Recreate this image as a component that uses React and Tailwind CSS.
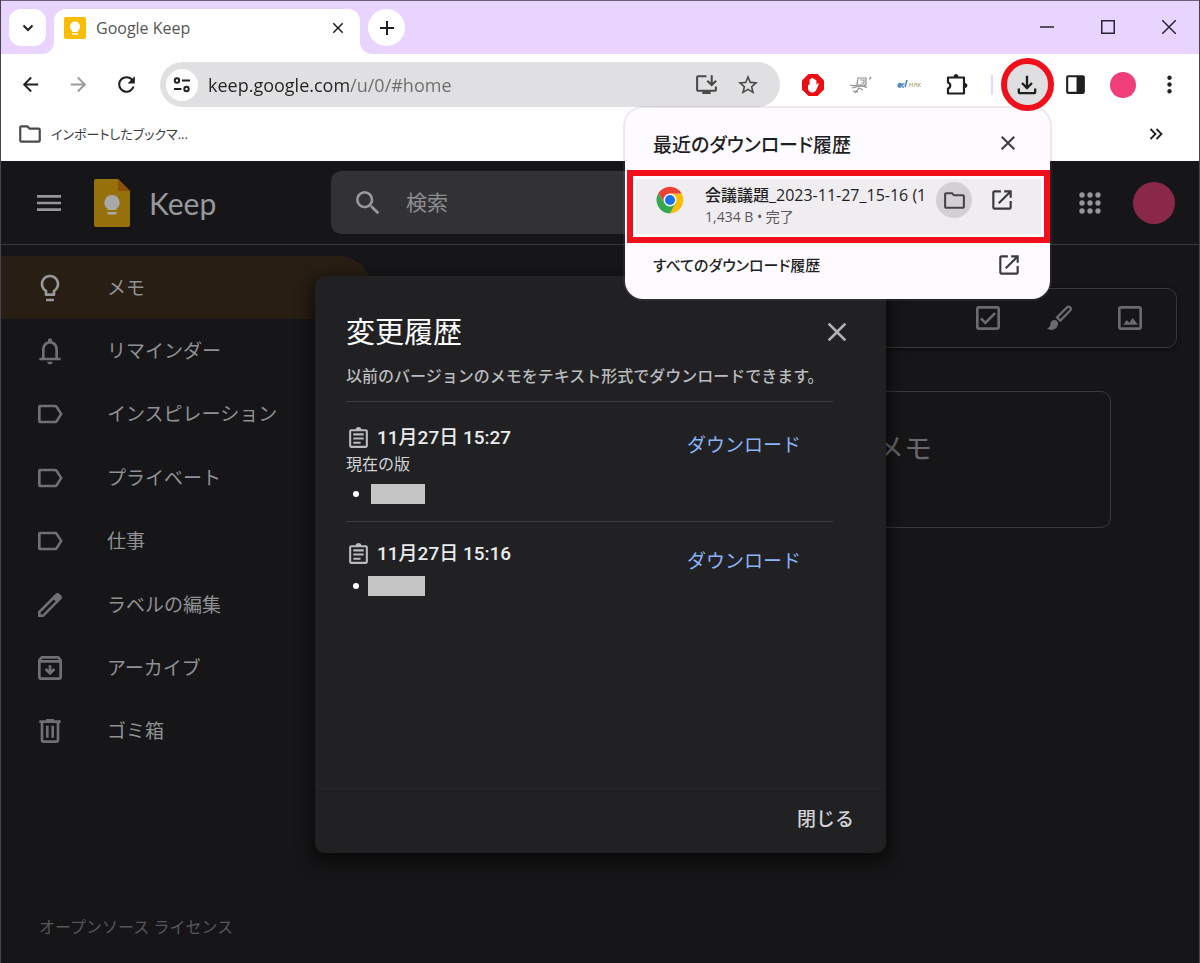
import React from 'react';

const ICONS = {
  menu: 'M3 18h18v-2H3v2zm0-5h18v-2H3v2zm0-7v2h18V6H3z',
  search:
    'M15.5 14h-.79l-.28-.27A6.47 6.47 0 0 0 16 9.5 6.5 6.5 0 1 0 9.5 16c1.61 0 3.09-.59 4.23-1.57l.27.28v.79l5 4.99L20.49 19l-4.99-5zm-6 0C7.01 14 5 11.99 5 9.5S7.01 5 9.5 5 14 7.01 14 9.5 11.99 14 9.5 14z',
  bulb: 'M9 21c0 .5.4 1 1 1h4c.6 0 1-.5 1-1v-1H9v1zm3-19C8.1 2 5 5.1 5 9c0 2.4 1.2 4.5 3 5.7V17c0 .5.4 1 1 1h6c.6 0 1-.5 1-1v-2.3c1.8-1.3 3-3.4 3-5.7 0-3.9-3.1-7-7-7zm2.9 11.1l-.9.6V16h-4v-2.3l-.9-.6C7.8 12.2 7 10.6 7 9c0-2.8 2.2-5 5-5s5 2.2 5 5c0 1.6-.8 3.2-2.1 4.1z',
  bell: 'M18 17v-6c0-3.07-1.63-5.64-4.5-6.32V4c0-.83-.67-1.5-1.5-1.5s-1.5.67-1.5 1.5v.68C7.64 5.36 6 7.92 6 11v6H4v2h16v-2h-2zm-2 0H8v-6c0-2.48 1.51-4.5 4-4.5s4 2.02 4 4.5v6zm-6 3h4c0 1.1-.9 2-2 2s-2-.9-2-2z',
  label: 'M3 17.500V6.500C3 5.700 3.700 5 4.500 5H16c.6 0 1.200.3 1.600.8L21.500 12l-3.900 6.200c-.4.5-1 .8-1.600.8H4.500c-.8 0-1.500-.7-1.500-1.500zM5 17h11l3.300-5L16 7H5v10z',
  pencil:
    'M20.41 4.94l-1.35-1.35c-.78-.78-2.05-.78-2.83 0L3 16.82V21h4.18L20.41 7.77c.79-.78.79-2.05 0-2.83zm-14 14.12L5 19v-1.36l9.82-9.82 1.41 1.41-9.82 9.83z',
  archive:
    'M20.54 5.23l-1.39-1.68C18.88 3.21 18.47 3 18 3H6c-.47 0-.88.21-1.16.55L3.46 5.23C3.17 5.57 3 6.02 3 6.5V19c0 1.1.9 2 2 2h14c1.1 0 2-.9 2-2V6.5c0-.48-.17-.93-.46-1.27zM6.24 5h11.52l.83 1H5.42l.82-1zM5 19V8h14v11H5zm11-5.5l-4 4-4-4 1.41-1.41L11 13.67V10h2v3.67l1.59-1.59L16 13.5z',
  trash: 'M15 4V3H9v1H4v2h1v13c0 1.1.9 2 2 2h10c1.1 0 2-.9 2-2V6h1V4h-5zm2 15H7V6h10v13zM9 8h2v9H9zm4 0h2v9h-2z',
  checkbox:
    'M19 3H5c-1.1 0-2 .9-2 2v14c0 1.1.9 2 2 2h14c1.1 0 2-.9 2-2V5c0-1.1-.9-2-2-2zm0 16H5V5h14v14zM18 9l-1.4-1.4-6.6 6.6-2.6-2.6L6 13l4 4z',
  image:
    'M19 3H5c-1.1 0-2 .9-2 2v14c0 1.1.9 2 2 2h14c1.1 0 2-.9 2-2V5c0-1.1-.9-2-2-2zm0 16H5V5h14v14zM7 17l2.500-3.500 2 2 2.500-3.500L18 17z',
  close: 'M19 6.41L17.59 5 12 10.59 6.41 5 5 6.41 10.59 12 5 17.59 6.41 19 12 13.41 17.59 19 19 17.59 13.41 12z',
  back: 'M20 11H7.83l5.59-5.59L12 4l-8 8 8 8 1.41-1.41L7.83 13H20v-2z',
  forward: 'M12 4l-1.41 1.41L16.17 11H4v2h12.170l-5.580 5.590L12 20l8-8z',
  reload:
    'M17.65 6.35A7.96 7.96 0 0 0 12 4a8 8 0 1 0 7.730 10h-2.080A6 6 0 1 1 12 6c1.660 0 3.140.69 4.220 1.780L13 11h7V4l-2.350 2.350z',
  star: 'M22 9.24l-7.190-.62L12 2 9.190 8.630 2 9.240l5.460 4.730L5.820 21 12 17.270 18.180 21l-1.630-7.030L22 9.240zM12 15.400l-3.760 2.270 1-4.280-3.320-2.880 4.380-.38L12 6.100l1.710 4.040 4.380.38-3.320 2.880 1 4.280L12 15.400z',
  folder:
    'M9.170 6l2 2H20v10H4V6h5.170M10 4H4c-1.100 0-1.990.9-1.990 2L2 18c0 1.100.9 2 2 2h16c1.100 0 2-.9 2-2V8c0-1.100-.9-2-2-2h-8l-2-2z',
  download: 'M12 16l-5-5 1.400-1.450 2.600 2.600V4h2v8.150l2.600-2.600L17 11l-5 5zm-6 4c-1.100 0-2-.9-2-2v-3h2v3h12v-3h2v3c0 1.100-.9 2-2 2H6z',
  open: 'M5 21c-1.100 0-2-.9-2-2V5c0-1.100.9-2 2-2h6v2H5v14h14v-6h2v6c0 1.100-.9 2-2 2H5zm4.700-5.300l-1.400-1.400L17.600 5H14V3h7v7h-2V6.400l-9.300 9.300z',
  panel: 'M5 3h14c1.100 0 2 .9 2 2v14c0 1.100-.9 2-2 2H5c-1.100 0-2-.9-2-2V5c0-1.100.9-2 2-2zm0 2v14h8V5H5z',
  more: 'M12 8c1.100 0 2-.9 2-2s-.9-2-2-2-2 .9-2 2 .9 2 2 2zm0 2c-1.100 0-2 .9-2 2s.9 2 2 2 2-.9 2-2-.9-2-2-2zm0 6c-1.100 0-2 .9-2 2s.9 2 2 2 2-.9 2-2-.9-2-2-2z',
  install:
    'M20 17H4V5h8V3H4c-1.110 0-2 .89-2 2v12c0 1.100.89 2 2 2h4v2h8v-2h4c1.100 0 2-.9 2-2v-3h-2v3zm-3-3l5-5-1.410-1.410L18 10.170V3h-2v7.170l-2.590-2.580L12 9z',
  note: 'M19 3h-4.180C14.400 1.840 13.300 1 12 1s-2.400.84-2.820 2H5c-1.100 0-2 .9-2 2v14c0 1.100.9 2 2 2h14c1.100 0 2-.9 2-2V5c0-1.100-.9-2-2-2zm0 16H5V5h14v14zM7 15h7v2H7zm0-4h10v2H7zm0-4h10v2H7z',
};

const Icon = ({ name, className }) => (
  <svg viewBox="0 0 24 24" fill="currentColor" aria-hidden="true" className={`shrink-0 ${className}`}>
    <path d={ICONS[name]} />
  </svg>
);

const IconButton = ({ label, className = '', children }) => (
  <button type="button" aria-label={label} className={`flex shrink-0 items-center justify-center ${className}`}>
    {children}
  </button>
);

const NAV_ITEMS = [
  { icon: 'bulb', text: 'メモ', active: true },
  { icon: 'bell', text: 'リマインダー' },
  { icon: 'label', text: 'インスピレーション' },
  { icon: 'label', text: 'プライベート' },
  { icon: 'label', text: '仕事' },
  { icon: 'pencil', text: 'ラベルの編集' },
  { icon: 'archive', text: 'アーカイブ' },
  { icon: 'trash', text: 'ゴミ箱' },
];

const TabStrip = () => (
  <div className="flex h-[54px] shrink-0 items-end border-t border-[#6b6075] bg-[#e8d4ff]">
    <IconButton label="タブを検索" className="mb-2 ml-2 size-[37px] self-end rounded-xl bg-white text-[#1f1f1f]">
      <svg viewBox="0 0 12 12" className="size-3" fill="none" stroke="currentColor" strokeWidth="2">
        <path d="M1.500 3.500L6 8l4.500-4.500" />
      </svg>
    </IconButton>
    <div className="relative ml-2 flex h-[45px] w-[306px] items-center rounded-t-xl bg-white pb-2 pl-[10px] pr-3">
      <span className="absolute -left-3 bottom-0 size-3 bg-white">
        <span className="block size-3 rounded-br-xl bg-[#e8d4ff]" />
      </span>
      <span className="absolute -right-3 bottom-0 size-3 bg-white">
        <span className="block size-3 rounded-bl-xl bg-[#e8d4ff]" />
      </span>
      <svg viewBox="0 0 22 22" className="size-[22px] shrink-0" aria-hidden="true">
        <rect width="22" height="22" rx="2" fill="#fbbc04" />
        <path d="M11 4.500a5 5 0 0 0-3 9v1.500h6v-1.500a5 5 0 0 0-3-9z" fill="#fff" />
        <path d="M8 16.300h6v1.500H8z" fill="#fff" />
      </svg>
      <span className="ml-[10px] flex-1 text-[16px] leading-5 text-[#555]">Google Keep</span>
      <IconButton label="タブを閉じる" className="size-5 text-[#1f1f1f]">
        <Icon name="close" className="size-[18px]" />
      </IconButton>
    </div>
    <IconButton label="新しいタブ" className="mb-2 ml-2 size-[37px] rounded-full bg-white text-[#1f1f1f]">
      <svg viewBox="0 0 14 14" className="size-[14px]" stroke="currentColor" strokeWidth="2">
        <path d="M7 0v14M0 7h14" />
      </svg>
    </IconButton>
    <div className="ml-auto flex h-[53px] pb-[2px] text-[#2b2433]">
      <IconButton label="最小化" className="w-[61px]">
        <svg viewBox="0 0 14 14" className="size-[14px]" stroke="currentColor" strokeWidth="1.500">
          <path d="M0 7h14" />
        </svg>
      </IconButton>
      <IconButton label="最大化" className="w-[61px]">
        <svg viewBox="0 0 14 14" className="size-[14px]" fill="none" stroke="currentColor" strokeWidth="1.500">
          <rect x="0.750" y="0.750" width="12.500" height="12.500" />
        </svg>
      </IconButton>
      <IconButton label="閉じる" className="w-[61px]">
        <svg viewBox="0 0 14 14" className="size-[14px]" stroke="currentColor" strokeWidth="1.500">
          <path d="M0 0l14 14M14 0L0 14" />
        </svg>
      </IconButton>
    </div>
  </div>
);

const Toolbar = () => (
  <div className="flex h-[61px] shrink-0 items-center bg-white pl-[5px] pr-2 text-[#1f1f1f]">
    <IconButton label="戻る" className="h-9 w-12"><Icon name="back" className="size-[23px]" /></IconButton>
    <IconButton label="進む" className="h-9 w-12 text-[#9b9b9b]"><Icon name="forward" className="size-[23px]" /></IconButton>
    <IconButton label="再読み込み" className="h-9 w-12"><Icon name="reload" className="size-[25px]" /></IconButton>

    <div className="ml-[10px] flex h-[45px] min-w-0 flex-1 items-center rounded-full bg-[#e0e0e2] pl-[6px] pr-5">
      <IconButton label="サイト情報を表示" className="size-8 rounded-full bg-white">
        <svg viewBox="0 0 18 18" className="size-[18px]" fill="none" stroke="currentColor" strokeWidth="2">
          <circle cx="4" cy="4.500" r="2.200" />
          <path d="M9 4.500h8M1 13h7.500" />
          <circle cx="13.500" cy="13" r="2.200" />
        </svg>
      </IconButton>
      {/* the host part of the address is darker than the path */}
      <input
        type="text"
        aria-label="アドレス検索バー"
        defaultValue="keep.google.com/u/0/#home"
        className="ml-[10px] min-w-0 flex-1 bg-[linear-gradient(90deg,#222_142px,#6b6b6b_142px)] bg-clip-text text-[18px] leading-7 text-transparent outline-none"
      />
      <IconButton label="インストール" className="w-[60px] text-[#4a4a4a]"><Icon name="install" className="size-[25px]" /></IconButton>
      <IconButton label="ブックマークに追加" className="w-6 text-[#4a4a4a]"><Icon name="star" className="size-6" /></IconButton>
    </div>

    <IconButton label="広告ブロック" className="ml-[9px] h-9 w-12">
      <svg viewBox="0 0 22 22" className="size-[22px]">
        <path d="M6.500 0h9L22 6.500v9L15.500 22h-9L0 15.500v-9z" fill="#ed0c12" />
        <path
          d="M6 11.500c0-1 1.300-1 1.500 0V6c0-1.200 1.600-1.200 1.700 0V4.700c0-1.200 1.700-1.200 1.800 0v.6c0-1.200 1.700-1.200 1.800 0v1c.2-1 1.600-.8 1.600.3V11l.8-1.300c.7-.9 1.700-.4 1.400.7l-2 4.800C13.800 17 12.500 18.500 10.500 18.500 7.500 18.500 6 16.500 6 14z"
          fill="#fff"
        />
      </svg>
    </IconButton>
    <IconButton label="拡張機能 1" className="h-9 w-12">
      <svg viewBox="0 0 24 20" className="h-5 w-6" fill="none" stroke="#8f8f8f" strokeWidth="1.200">
        <path d="M9 3h8v7H8zM11 5h4v3h-3M1 10c4 1 6 1 8 0M3 13l8-2 7 1M6 18l4-5 4 2M4 16l5 1M20 4c2 0 2-2 1-2M15 10l2 3" />
      </svg>
    </IconButton>
    <IconButton label="拡張機能 2" className="h-9 w-12">
      <svg viewBox="0 0 24 12" className="h-3 w-6" fill="none" strokeWidth="1">
        <path d="M1 7.500c3-1 4-3 2-3-2.500 0-2.500 4.500 1 3.500M10 1L8 8M7.500 5C4 4 4 9 7 8" stroke="#3f7fc4" strokeWidth="1.400" />
        <path d="M12 8l1-4 1 2 2-2-1 4M17 8l1-4 1 2 1-2v4M21 8l1-4M24 4l-2 2 2 2" stroke="#c9bb9c" />
      </svg>
    </IconButton>
    <IconButton label="拡張機能" className="h-9 w-12">
      <svg viewBox="0 0 24 24" className="size-6" fill="none" stroke="currentColor" strokeWidth="2.200" strokeLinejoin="round">
        <path d="M3 4.500h16v16H3v-5c3-1 3-5 0-6z" />
        <path d="M9 3.500a2 2 0 0 1 4 0zM20 10.500a2 2 0 0 1 0 4z" fill="currentColor" strokeWidth="1" />
      </svg>
    </IconButton>
    <span className="mx-[10px] h-5 w-[2px] bg-[#e8d4ff]" />
    <div className="relative z-30 flex w-12 shrink-0 justify-center">
      <IconButton label="ダウンロード" className="size-[42px] rounded-full bg-[#dfdfe1]">
        <Icon name="download" className="size-7" />
      </IconButton>
      <span className="absolute -left-[2px] -top-[6px] size-[53px] rounded-full border-[6px] border-[#f0101c]" />
    </div>
    <IconButton label="サイドパネル" className="h-9 w-12"><Icon name="panel" className="size-[25px]" /></IconButton>
    <IconButton label="プロフィール" className="h-9 w-12"><span className="size-[26px] rounded-full bg-[#ef3e7a]" /></IconButton>
    <IconButton label="メニュー" className="h-9 w-11"><Icon name="more" className="size-[27px]" /></IconButton>
  </div>
);

const BookmarksBar = () => (
  <div className="flex h-[46px] shrink-0 items-center justify-between bg-white pb-2 pl-4 pr-9">
    <button type="button" className="flex items-center gap-2 text-[#3a3a3a]">
      <Icon name="folder" className="size-[26px] text-[#4a4a4a]" />
      <span className="text-[13px] leading-5 [font-feature-settings:'palt']">インポートしたブックマ...</span>
    </button>
    <IconButton label="他のブックマーク" className="text-[#1f1f1f]">
      <svg viewBox="0 0 14 12" className="h-3 w-[14px]" fill="none" stroke="currentColor" strokeWidth="1.800">
        <path d="M1.500 1L6.500 6l-5 5M7.500 1l5 5-5 5" />
      </svg>
    </IconButton>
  </div>
);

const ChromeLogo = () => (
  <svg viewBox="0 0 48 48" className="size-7 shrink-0" aria-hidden="true">
    <path d="M24 13h19.900a23 23 0 0 1-19.900 34l9.530-17.500z" fill="#fbbc04" />
    <path d="M14.500 29.500L4.080 12.500A23 23 0 0 0 24 47l9.530-17.500z" fill="#34a853" />
    <path d="M24 13h19.900A23 23 0 0 0 4.080 12.500L14.500 29.500z" fill="#ea4335" />
    <circle cx="24" cy="24" r="11" fill="#fff" />
    <circle cx="24" cy="24" r="8.700" fill="#1a73e8" />
  </svg>
);

const DownloadsPopup = () => (
  <section className="absolute right-[149px] top-[108px] z-20 w-[425px] rounded-[18px] bg-[#fdfbff] pb-3 text-[#1f1f1f] shadow-[0_0_0_2px_rgba(120,110,130,0.15)] [font-feature-settings:'palt']">
    <div className="flex h-[62px] items-center justify-between pl-7 pr-[30px] pt-2">
      <h2 className="pt-1 text-[19px] font-medium leading-7">最近のダウンロード履歴</h2>
      <IconButton label="閉じる" className="text-[#3a3a3d]"><Icon name="close" className="size-6" /></IconButton>
    </div>
    <div className="ml-[2px] border-[6px] border-[#f0101c] bg-[#fdfbff] p-[3px]">
      <div className="flex h-[55px] items-center bg-[#f0edf1] pb-[13px] pl-5">
        <ChromeLogo />
        <div className="ml-[21px] min-w-0 flex-1 self-start pt-1">
          <p className="whitespace-nowrap text-[16px] font-medium leading-6">会議議題_2023-11-27_15-16 (1</p>
          <p className="text-[14px] leading-5 text-[#5a575c]">1,434 B • 完了</p>
        </div>
        <IconButton label="フォルダに表示" className="ml-[10px] size-9 rounded-full bg-[#d3d0d5] text-[#45434a]">
          <Icon name="folder" className="size-[25px]" />
        </IconButton>
        <IconButton label="ファイルを開く" className="ml-[17px] mr-[26px] text-[#3a3a3d]">
          <Icon name="open" className="size-[26px]" />
        </IconButton>
      </div>
    </div>
    <a href="#downloads" className="flex h-11 items-center justify-between pl-7 pr-7">
      <span className="text-[15px] font-medium leading-6">すべてのダウンロード履歴</span>
      <Icon name="open" className="size-[26px] text-[#3a3a3d]" />
    </a>
  </section>
);

const AppHeader = () => (
  <header className="flex h-[84px] shrink-0 items-center border-b border-[#37383a] pr-6">
    <div className="flex w-[330px] shrink-0 items-center pl-8">
      <IconButton label="メインメニュー" className="text-[#97989a]"><Icon name="menu" className="size-8" /></IconButton>
      <svg viewBox="0 0 36 48" className="ml-[29px] h-12 w-9" aria-hidden="true">
        <path d="M2 0h22l12 12v34a2 2 0 0 1-2 2H2a2 2 0 0 1-2-2V2a2 2 0 0 1 2-2z" fill="#96700a" />
        <path d="M24 0l12 12H24z" fill="#8c5207" />
        <path d="M18 16a7.500 7.500 0 0 0-4.500 13.500V31h9v-1.500A7.500 7.500 0 0 0 18 16zM13.500 33h9v2.500h-9z" fill="#a8a8a8" />
      </svg>
      <span className="ml-[19px] font-[Lato] text-[30px] leading-9 text-[#97989a]">Keep</span>
    </div>
    <label className="mr-6 flex h-[63px] min-w-0 flex-1 items-center rounded-[10px] bg-[#323234] pl-[21px] text-[#97989a]">
      <Icon name="search" className="size-8" />
      <input
        type="search"
        aria-label="検索"
        placeholder="検索"
        className="ml-[22px] min-w-0 flex-1 bg-transparent pb-[2px] text-[21px] leading-8 outline-none placeholder:text-[#8d8e90]"
      />
    </label>
    <div className="flex w-[210px] shrink-0 items-center justify-end gap-[27px]">
      <IconButton label="Google アプリ" className="text-[#949597]">
        <svg viewBox="0 0 24 24" className="size-8" fill="currentColor">
          {[6, 12, 18].map((y) => [6, 12, 18].map((x) => (
            <circle key={`${x}-${y}`} cx={x} cy={y} r="2" />
          )))}
        </svg>
      </IconButton>
      <IconButton label="アカウント" className="size-[42px] rounded-full bg-[#8a284a]" />
    </div>
  </header>
);

const Sidebar = () => (
  <aside className="flex w-[370px] shrink-0 flex-col pt-[11px]">
    <nav className="flex h-[507px] flex-col">
      {NAV_ITEMS.map((item) => (
        <a
          key={item.text}
          href="#home"
          className={`flex flex-1 items-center rounded-r-full pl-[33px] text-[19px] leading-7 text-[#8f9194] ${
            item.active ? 'bg-[#281e13]' : ''
          }`}
        >
          <Icon name={item.icon} className={item.active ? 'size-8 text-[#97989a]' : 'size-8 text-[#6e7073]'} />
          <span className="ml-[41px]">{item.text}</span>
        </a>
      ))}
    </nav>
    <a href="#license" className="mb-6 ml-[38px] mt-auto text-[16px] leading-6 text-[#55585b]">
      オープンソース ライセンス
    </a>
  </aside>
);

const NotesArea = () => (
  <main className="flex min-w-0 flex-1 flex-col pr-[22px] pt-[43px]">
    <div className="ml-5 flex h-[60px] items-center justify-end gap-[39px] rounded-[10px] border border-[#37383a] pr-[30px] text-[#696b6d] shadow-[0_1px_4px_rgba(0,0,0,0.600)]">
      <IconButton label="新しいリスト"><Icon name="checkbox" className="size-8" /></IconButton>
      <IconButton label="図形描画付きの新しいメモ">
        <svg viewBox="0 0 24 24" className="size-8" fill="none" stroke="currentColor" strokeWidth="1.700">
          <path d="M10.500 11.500L18 4a1.700 1.700 0 0 1 2.400 2.400L12.900 13.900z" />
          <path d="M8.500 13.500c1.700 0 2.800 1.100 2.800 2.700 0 2.700-2.300 4.800-5 4.800-1.500 0-2.700-.6-3.300-1.500 1.500 0 2.500-1 2.500-3 0-1.700 1.300-3 3-3z" fill="currentColor" stroke="none" />
        </svg>
      </IconButton>
      <IconButton label="画像付きの新しいメモ"><Icon name="image" className="size-8" /></IconButton>
    </div>
    <article className="mr-[66px] mt-[43px] flex h-[137px] w-[470px] self-end rounded-[10px] border border-[#37383a] pl-[234px] pt-9">
      <p className="text-[28px] leading-10 text-[#67696b]">メモ</p>
    </article>
  </main>
);

const VersionEntry = ({ date, current, children }) => (
  <li className="flex items-start justify-between border-[#3c3e41] pb-[9px] pr-8 pt-[18px] not-first:border-t">
    <div>
      <div className="flex items-center gap-[6px]">
        <Icon name="note" className="size-[25px]" />
        <span className="font-[Roboto,'Noto_Sans_CJK_JP',sans-serif] text-[19px] font-medium leading-7 text-[#eaebed]">{date}</span>
      </div>
      {current && <p className="text-[16px] leading-6 text-[#d0d2d5]">現在の版</p>}
      <div className="flex h-9 items-center pl-[7px]">
        <span className="size-[6px] rounded-full bg-white" />
        {children}
      </div>
    </div>
    <a href="#download" className="mt-[7px] text-[19px] leading-7 text-[#8ab4f8]">ダウンロード</a>
  </li>
);

const HistoryDialog = () => (
  <div
    role="dialog"
    aria-labelledby="history-title"
    className="absolute left-[314px] top-[276px] z-10 flex h-[577px] w-[571px] flex-col rounded-[10px] bg-[#212123] text-[#b9bbbe] shadow-[0_6px_16px_4px_rgba(0,0,0,0.550)]"
  >
    <div className="flex-1 pl-[31px] pr-[53px] pt-9">
      <div className="flex items-center justify-between">
        <h1 id="history-title" className="text-[29px] leading-10 text-white">変更履歴</h1>
        <IconButton label="閉じる" className="-mr-5 size-8 text-[#b0b2b4]"><Icon name="close" className="size-8" /></IconButton>
      </div>
      <p className="whitespace-nowrap border-b border-[#3c3e41] pb-[13px] pt-3 text-[16px] font-medium leading-6">
        以前のバージョンのメモをテキスト形式でダウンロードできます。
      </p>
      <ul className="pt-1">
        <VersionEntry date="11月27日 15:27" current>
          <span className="ml-3 h-5 w-[54px] bg-[#c5c5c5]" />
        </VersionEntry>
        <VersionEntry date="11月27日 15:16">
          <span className="ml-[9px] h-5 w-[57px] bg-[#c5c5c5]" />
        </VersionEntry>
      </ul>
    </div>
    <div className="flex h-[62px] items-center justify-end border-t border-[#1b1c1e] pb-2 pr-8">
      <button type="button" className="text-[19px] font-medium leading-7 text-[#d0d2d5]">閉じる</button>
    </div>
  </div>
);

const App = () => (
  <div className="relative flex min-h-screen flex-col border-x border-[#46434c] bg-[#161618] font-['Open_Sans','Noto_Sans_CJK_JP',sans-serif]">
    <TabStrip />
    <Toolbar />
    <BookmarksBar />
    <AppHeader />
    <div className="flex flex-1">
      <Sidebar />
      <NotesArea />
    </div>
    <HistoryDialog />
    <DownloadsPopup />
  </div>
);

export default App;
